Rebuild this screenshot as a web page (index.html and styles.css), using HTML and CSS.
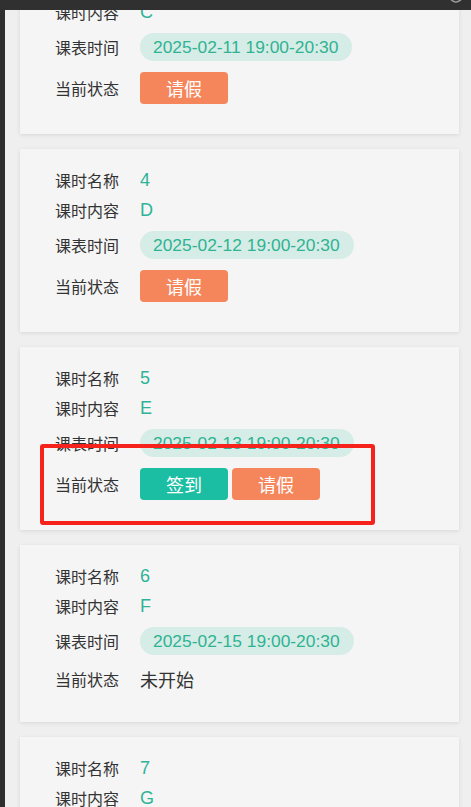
FILE: index.html
```html
<!DOCTYPE html>
<html lang="zh-CN">
<head>
    <meta charset="UTF-8">
    <meta name="viewport" content="width=device-width, initial-scale=1">
    <title>课表</title>
    <link rel="stylesheet" href="styles.css">
</head>
<body>
    <div class="topbar">
        <svg class="topbar-icon" width="18" height="18" viewBox="0 0 18 18">
            <path d="M15 9a6 6 0 1 1-2-4.5" fill="none" stroke="#9a9a9a" stroke-width="1.6"/>
        </svg>
    </div>
    <div class="main">
        <div class="side"></div>
        <div class="viewport">
            <div class="list">
                <div class="card">
                    <div class="row"><span class="label">课时名称</span><span class="value">3</span></div>
                    <div class="row"><span class="label">课时内容</span><span class="value">C</span></div>
                    <div class="row row-time"><span class="label">课表时间</span><span class="pill">2025-02-11 19:00-20:30</span></div>
                    <div class="row"><span class="label">当前状态</span><span class="btn btn-leave">请假</span></div>
                </div>

                <div class="card">
                    <div class="row"><span class="label">课时名称</span><span class="value">4</span></div>
                    <div class="row"><span class="label">课时内容</span><span class="value">D</span></div>
                    <div class="row row-time"><span class="label">课表时间</span><span class="pill">2025-02-12 19:00-20:30</span></div>
                    <div class="row"><span class="label">当前状态</span><span class="btn btn-leave">请假</span></div>
                </div>

                <div class="card">
                    <div class="row"><span class="label">课时名称</span><span class="value">5</span></div>
                    <div class="row"><span class="label">课时内容</span><span class="value">E</span></div>
                    <div class="row row-time"><span class="label">课表时间</span><span class="pill">2025-02-13 19:00-20:30</span></div>
                    <div class="row"><span class="label">当前状态</span><span class="btn btn-sign">签到</span><span class="btn btn-leave">请假</span></div>
                    <div class="mark"></div>
                </div>

                <div class="card">
                    <div class="row"><span class="label">课时名称</span><span class="value">6</span></div>
                    <div class="row"><span class="label">课时内容</span><span class="value">F</span></div>
                    <div class="row row-time"><span class="label">课表时间</span><span class="pill">2025-02-15 19:00-20:30</span></div>
                    <div class="row"><span class="label">当前状态</span><span class="status">未开始</span></div>
                </div>

                <div class="card">
                    <div class="row"><span class="label">课时名称</span><span class="value">7</span></div>
                    <div class="row"><span class="label">课时内容</span><span class="value">G</span></div>
                    <div class="row row-time"><span class="label">课表时间</span><span class="pill">2025-02-16 19:00-20:30</span></div>
                    <div class="row"><span class="label">当前状态</span><span class="status">未开始</span></div>
                </div>
            </div>
        </div>
    </div>
</body>
</html>
```

FILE: styles.css
```css
* {
    margin: 0;
    padding: 0;
    box-sizing: border-box;
}
html, body {
    height: 100%;
    overflow: hidden;
}
body {
    font-family: "Liberation Sans", "Noto Sans CJK SC", sans-serif;
    display: flex;
    flex-direction: column;
    background-color: #efefef;
    color: #333;
}
.topbar {
    height: 10px;
    flex-shrink: 0;
    background: #303030;
    position: relative;
    overflow: hidden;
}
.topbar-icon {
    position: absolute;
    right: 6px;
    top: -13px;
}
.main {
    flex: 1;
    display: flex;
    min-height: 0;
}
.side {
    width: 5px;
    flex-shrink: 0;
    background: #2e2e2e;
}
.viewport {
    flex: 1;
    overflow: hidden;
    padding: 0 12px 0 15px;
}
.list {
    margin-top: -59px;
    display: flex;
    flex-direction: column;
    gap: 15px;
}
.card {
    position: relative;
    background: #f5f5f5;
    box-shadow: 0 1px 4px rgba(0, 0, 0, 0.1);
    padding: 19px 0 30px 35px;
}
.row {
    display: flex;
    align-items: center;
    min-height: 24px;
}
.row + .row {
    margin-top: 6px;
}
.row.row-time {
    margin-top: 9px;
    margin-bottom: 11px;
}
.row.row-time + .row {
    margin-top: 0;
}
.label {
    width: 85px;
    flex-shrink: 0;
    font-family: "Noto Sans CJK SC", sans-serif;
    font-size: 16px;
    color: #333;
}
.value {
    font-size: 18px;
    color: #2db396;
}
.pill {
    height: 28px;
    line-height: 28px;
    padding: 0 14px 0 13px;
    border-radius: 14px;
    background: #d6ece6;
    color: #2fb393;
    font-size: 17.4px;
}
.btn {
    width: 88px;
    height: 32px;
    line-height: 32px;
    border-radius: 4px;
    text-align: center;
    color: #fff;
    font-family: "Noto Sans CJK SC", sans-serif;
    font-size: 18px;
}
.btn + .btn {
    margin-left: 4px;
}
.btn-leave {
    background: #f5865b;
}
.btn-sign {
    background: #1bbea3;
}
.status {
    font-family: "Noto Sans CJK SC", sans-serif;
    font-size: 18px;
    color: #333;
}
.mark {
    position: absolute;
    left: 20px;
    top: 97px;
    width: 335px;
    height: 81px;
    border: 4px solid #f5231c;
    border-radius: 3px;
}
```
